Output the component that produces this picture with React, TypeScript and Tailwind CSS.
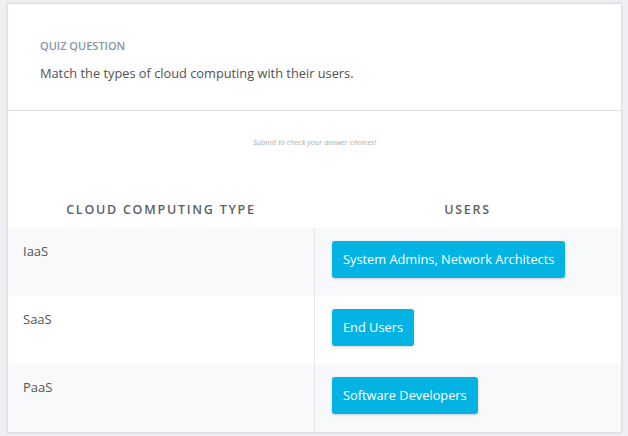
export default function App() {
  const rows = [
    { type: "IaaS", users: "System Admins, Network Architects", shade: true },
    { type: "SaaS", users: "End Users", shade: false },
    { type: "PaaS", users: "Software Developers", shade: true },
  ];

  return (
    <div className="min-h-screen bg-[#eef0f3] pt-[3px] pl-[7px] pr-[6px] pb-[3px] font-['Open_Sans',sans-serif]">
      <div className="bg-white border border-[#dde1e6] shadow-[0_0_3px_rgba(0,0,0,0.08)] h-[430px] flex flex-col">
        <div className="pl-[32px] pt-[34px] h-[107px] border-b border-[#dcdfe3]">
          <p className="text-[11px] font-semibold text-[#8795a4] uppercase leading-[16px]">Quiz Question</p>
          <p className="text-[12.8px] text-[#525252] mt-[10px] leading-[18px]">
            Match the types of cloud computing with their users.
          </p>
        </div>

        <p className="text-center italic text-[7.5px] text-[#ababab] mt-[26px] leading-[10px]">
          Submit to check your answer choices!
        </p>

        <div className="grid grid-cols-[306px_1fr] mt-[53px] h-[20px] items-center">
          <p className="text-center text-[12.5px] tracking-[0.14em] text-[#5b5f64] font-semibold">CLOUD COMPUTING TYPE</p>
          <p className="text-center text-[12.5px] tracking-[0.14em] text-[#5b5f64] font-semibold">USERS</p>
        </div>

        <div className="mt-[8px] flex-1 flex flex-col">
          {rows.map((r) => (
            <div
              key={r.type}
              className={`grid grid-cols-[306px_1fr] flex-1 ${r.shade ? "bg-[#f7f9fb]" : "bg-white"}`}
            >
              <div className="pl-[15px] pt-[14px] text-[13px] text-[#555555]">{r.type}</div>
              <div className="border-l border-[#e3e6ea] pl-[17px] pt-[13px]">
                <button className="h-[37px] px-[11px] rounded-[3px] bg-[#02b3e4] text-white text-[12.8px] shadow-[0_1px_3px_rgba(0,0,0,0.18)]">
                  {r.users}
                </button>
              </div>
            </div>
          ))}
        </div>
      </div>
    </div>
  );
}
